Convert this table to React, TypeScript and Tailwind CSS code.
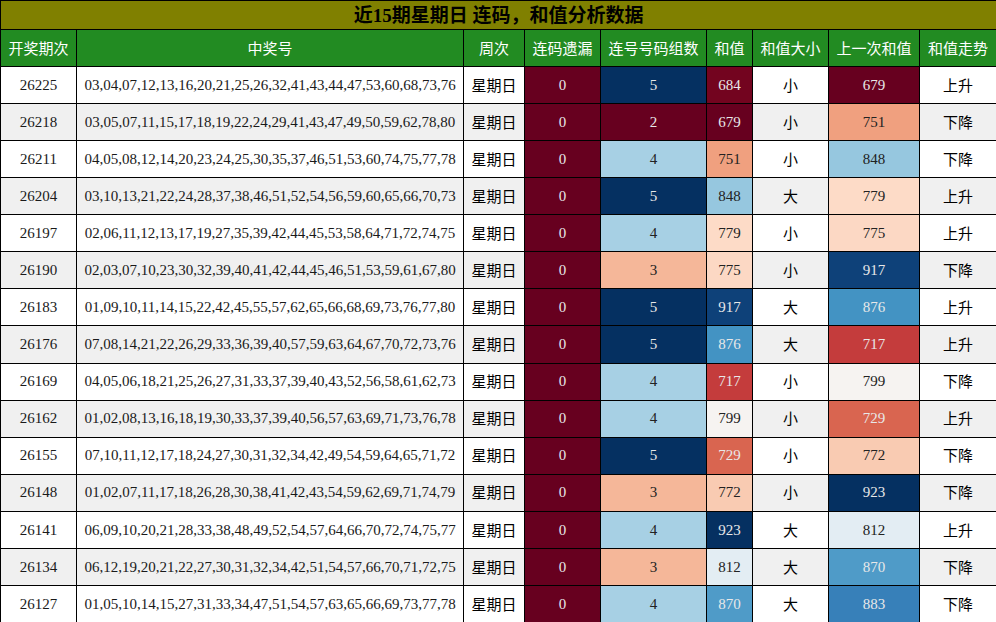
import React from "react";

type Row = [string, string, number, number, number, string, number, string];

const rows: Row[] = [
  ["26225", "03,04,07,12,13,16,20,21,25,26,32,41,43,44,47,53,60,68,73,76", 0, 5, 684, "小", 679, "上升"],
  ["26218", "03,05,07,11,15,17,18,19,22,24,29,41,43,47,49,50,59,62,78,80", 0, 2, 679, "小", 751, "下降"],
  ["26211", "04,05,08,12,14,20,23,24,25,30,35,37,46,51,53,60,74,75,77,78", 0, 4, 751, "小", 848, "下降"],
  ["26204", "03,10,13,21,22,24,28,37,38,46,51,52,54,56,59,60,65,66,70,73", 0, 5, 848, "大", 779, "上升"],
  ["26197", "02,06,11,12,13,17,19,27,35,39,42,44,45,53,58,64,71,72,74,75", 0, 4, 779, "小", 775, "上升"],
  ["26190", "02,03,07,10,23,30,32,39,40,41,42,44,45,46,51,53,59,61,67,80", 0, 3, 775, "小", 917, "下降"],
  ["26183", "01,09,10,11,14,15,22,42,45,55,57,62,65,66,68,69,73,76,77,80", 0, 5, 917, "大", 876, "上升"],
  ["26176", "07,08,14,21,22,26,29,33,36,39,40,57,59,63,64,67,70,72,73,76", 0, 5, 876, "大", 717, "上升"],
  ["26169", "04,05,06,18,21,25,26,27,31,33,37,39,40,43,52,56,58,61,62,73", 0, 4, 717, "小", 799, "下降"],
  ["26162", "01,02,08,13,16,18,19,30,33,37,39,40,56,57,63,69,71,73,76,78", 0, 4, 799, "小", 729, "上升"],
  ["26155", "07,10,11,12,17,18,24,27,30,31,32,34,42,49,54,59,64,65,71,72", 0, 5, 729, "小", 772, "下降"],
  ["26148", "01,02,07,11,17,18,26,28,30,38,41,42,43,54,59,62,69,71,74,79", 0, 3, 772, "小", 923, "下降"],
  ["26141", "06,09,10,20,21,28,33,38,48,49,52,54,57,64,66,70,72,74,75,77", 0, 4, 923, "大", 812, "上升"],
  ["26134", "06,12,19,20,21,22,27,30,31,32,34,42,51,54,57,66,70,71,72,75", 0, 3, 812, "大", 870, "下降"],
  ["26127", "01,05,10,14,15,27,31,33,34,47,51,54,57,63,65,66,69,73,77,78", 0, 4, 870, "大", 883, "下降"],
];

const sumColor: Record<number, string> = {
  684: "bg-[#73041f] text-[#e8e8e8]",
  679: "bg-[#67001f] text-[#e8e8e8]",
  751: "bg-[#f0a07f] text-[#222222]",
  848: "bg-[#96c7df] text-[#222222]",
  779: "bg-[#fddbc7] text-[#222222]",
  775: "bg-[#fcd8c4] text-[#222222]",
  917: "bg-[#0e4179] text-[#e8e8e8]",
  876: "bg-[#4393c3] text-[#e8e8e8]",
  717: "bg-[#c43c3c] text-[#e8e8e8]",
  799: "bg-[#f6f3f1] text-[#222222]",
  729: "bg-[#d96550] text-[#e8e8e8]",
  772: "bg-[#f9cbb2] text-[#222222]",
  923: "bg-[#053061] text-[#e8e8e8]",
  812: "bg-[#e3edf3] text-[#222222]",
  870: "bg-[#4f9bc8] text-[#e8e8e8]",
  883: "bg-[#3780b9] text-[#e8e8e8]",
};

const cntColor: Record<number, string> = {
  5: "bg-[#053061] text-[#e8e8e8]",
  2: "bg-[#67001f] text-[#e8e8e8]",
  4: "bg-[#a7d0e4] text-[#222222]",
  3: "bg-[#f5b799] text-[#222222]",
};

const headers = ["开奖期次", "中奖号", "周次", "连码遗漏", "连号号码组数", "和值", "和值大小", "上一次和值", "和值走势"];
const colClasses = ["w-[76px]", "w-[387px]", "w-[61px]", "w-[76px]", "w-[106px]", "w-[46px]", "w-[76px]", "w-[91px]", "w-[77px]"];

const cjk = "font-['Noto_Sans_CJK_SC',sans-serif]";

function Heat({ value, cls }: { value: number; cls: string }) {
  return <td className={`border border-black text-center ${cls}`}>{value}</td>;
}

export default function App() {
  return (
    <div className="w-[996px] h-[622px] bg-white overflow-hidden font-['Liberation_Serif','Noto_Sans_CJK_SC',serif]">
      <table className="table-fixed border-collapse w-[996px] text-[15px] text-[#1a1a1a]">
        <colgroup>
          {colClasses.map((c, i) => (
            <col key={i} className={c} />
          ))}
        </colgroup>
        <thead>
          <tr className="h-[29px]">
            <th colSpan={9} className="border border-black bg-[#808000] text-center text-[19px] font-bold text-black leading-none">
              近15期星期日 连码，和值分析数据
            </th>
          </tr>
          <tr className="h-[37px]">
            {headers.map((h) => (
              <th key={h} className={`border border-black bg-[#228b22] text-center font-normal text-white ${cjk}`}>
                {h}
              </th>
            ))}
          </tr>
        </thead>
        <tbody>
          {rows.map((r, i) => (
            <tr key={r[0]} className={`h-[37.07px] ${i % 2 === 1 ? "bg-[#f0f0f0]" : "bg-white"}`}>
              <td className="border border-black text-center">{r[0]}</td>
              <td className="border border-black text-center whitespace-nowrap">{r[1]}</td>
              <td className={`border border-black text-center text-black ${cjk}`}>星期日</td>
              <Heat value={r[2]} cls="bg-[#67001f] text-[#e8e8e8]" />
              <Heat value={r[3]} cls={cntColor[r[3]]} />
              <Heat value={r[4]} cls={sumColor[r[4]]} />
              <td className={`border border-black text-center text-black ${cjk}`}>{r[5]}</td>
              <Heat value={r[6]} cls={sumColor[r[6]]} />
              <td className={`border border-black text-center text-black ${cjk}`}>{r[7]}</td>
            </tr>
          ))}
        </tbody>
      </table>
    </div>
  );
}
